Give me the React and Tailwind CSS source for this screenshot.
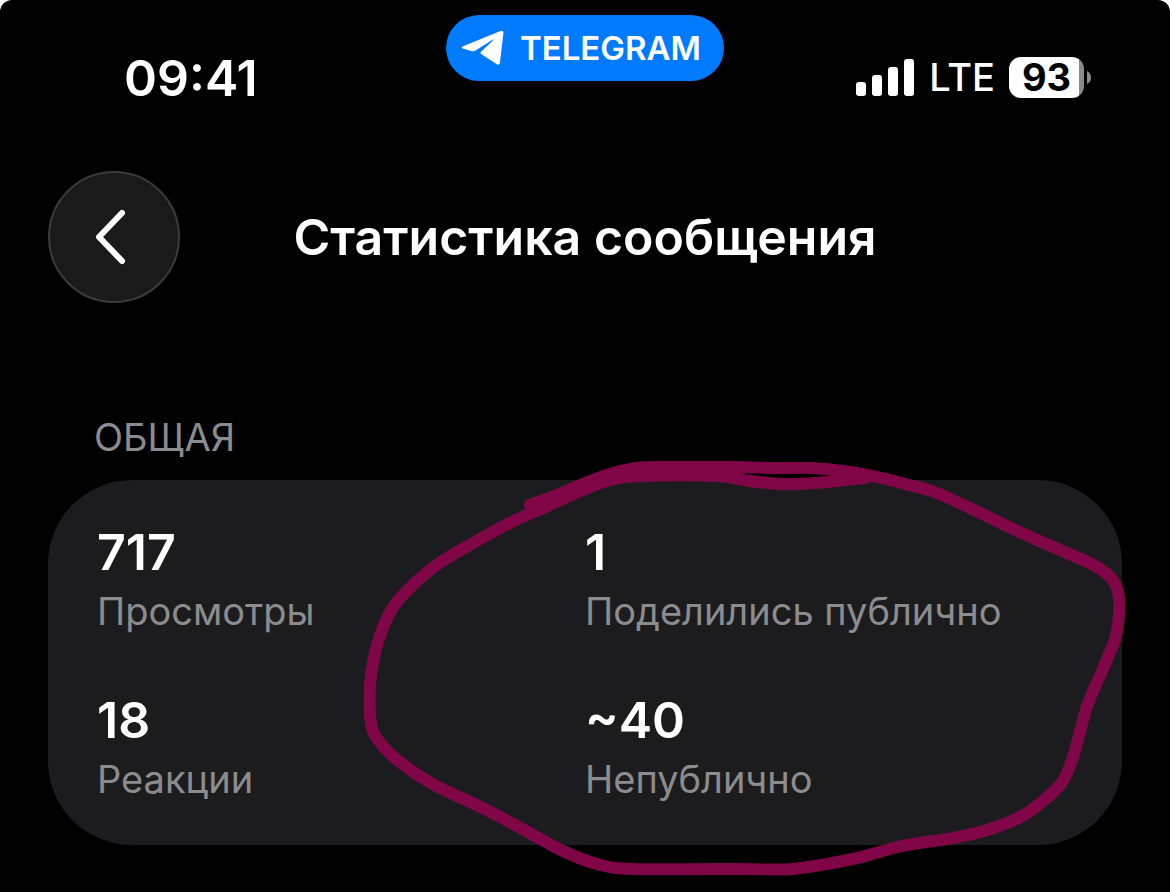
import React from "react";

const stats = [
  { value: "717", label: "Просмотры" },
  { value: "1", label: "Поделились публично" },
  { value: "18", label: "Реакции" },
  { value: "~40", label: "Непублично" },
];

const penPoints = [
  [530, 505], [557, 495], [583, 484], [610, 474], [637, 468], [667, 467], [735, 467], [775, 468], [812, 468], [843, 471],
  [873, 476], [905, 484], [937, 493], [980, 513], [1017, 531], [1064, 552], [1093, 565],
  [1110, 577], [1118, 592], [1119, 615], [1115, 640], [1100, 676], [1087, 707], [1078, 740],
  [1072, 761], [1062, 783], [1043, 802], [1020, 818], [987, 831], [953, 839], [902, 847],
  [853, 860], [793, 870], [740, 870], [633, 870], [597, 865], [563, 852], [517, 827],
  [483, 809], [433, 785], [400, 763], [379, 742], [371, 724], [370, 687], [374, 658],
  [380, 636], [391, 611], [407, 591], [437, 565], [470, 545], [510, 523], [543, 508],
  [583, 490], [610, 480], [640, 476], [717, 476], [750, 481], [783, 484], [815, 483],
  [845, 480], [866, 478],
];

function smoothPath(points) {
  let d = `M${points[0][0]} ${points[0][1]}`;
  for (let i = 0; i < points.length - 1; i++) {
    const a = points[i - 1] || points[i];
    const b = points[i];
    const c = points[i + 1];
    const e = points[i + 2] || c;
    d += ` C${b[0] + (c[0] - a[0]) / 6} ${b[1] + (c[1] - a[1]) / 6} ${c[0] - (e[0] - b[0]) / 6} ${c[1] - (e[1] - b[1]) / 6} ${c[0]} ${c[1]}`;
  }
  return d;
}

function StatusBar() {
  return (
    <div className="grid grid-cols-[1fr_auto_1fr] items-start pt-[15px]">
      <time className="justify-self-start pl-[124px] pt-[33px] text-[50px] leading-[60px] font-semibold">09:41</time>
      <a href="#telegram" className="flex h-[66px] items-center gap-4 rounded-full bg-[#007aff] pl-[15px] pr-[23px]">
        <svg viewBox="0 0 43 36" className="h-9 w-[43px]" fill="currentColor" aria-hidden="true">
          <path d="M2.1 16.2 39.5 1.1Q42.7 0 42.4 3.2L39 32.6Q38.5 36.2 35.4 34.1L20.4 24.2Q18.6 23.1 20.3 21.5L32.2 10.2Q33.2 9 31.5 9.8L14.6 20.6Q12.6 21.9 10.4 21L1.7 18.6Q-.2 17.6 2.1 16.2Z" />
        </svg>
        <span className="text-[33px] leading-[42px] font-semibold">TELEGRAM</span>
      </a>
      <div className="flex items-center justify-self-end pr-[79px] pt-[38px]">
        <svg viewBox="0 0 58 37" className="mr-[15px] h-[37px] w-[58px]" fill="currentColor" role="img" aria-label="Сигнал">
          <rect x="0" y="23" width="10" height="14" rx="3" />
          <rect x="16" y="16" width="10" height="21" rx="3" />
          <rect x="32" y="8" width="10" height="29" rx="3" />
          <rect x="48" y="0" width="10" height="37" rx="3" />
        </svg>
        <span className="mr-[14px] text-[38px] leading-[48px] font-medium">LTE</span>
        <div className="flex items-center gap-[3px]">
          <div className="flex h-[41px] w-[75px] items-center justify-center rounded-[12px] bg-linear-to-r from-white from-93% to-[#8a8a8a] to-93% text-[38px] leading-[48px] font-bold text-black">
            93
          </div>
          <svg viewBox="0 0 4 13" className="h-[13px] w-1" fill="#8a8a8a" aria-hidden="true">
            <path d="M0 0Q4 2 4 6.500Q4 11 0 13Z" />
          </svg>
        </div>
      </div>
    </div>
  );
}

export default function App() {
  return (
    <div className="min-h-screen bg-white font-['Inter','Roboto',sans-serif] text-white">
      <div className="min-h-screen rounded-t-[12px] bg-black pb-[46px]">
        <StatusBar />
        <header className="mt-[63px] grid grid-cols-[132px_1fr_132px] items-center px-12">
          <button type="button" aria-label="Назад" className="flex size-[132px] items-center justify-center rounded-full border-2 border-[#3b3b3b] bg-[#1a1a1a]">
            <svg viewBox="0 0 132 132" className="size-[132px] shrink-0" fill="none" stroke="currentColor" strokeWidth="6" strokeLinecap="round" strokeLinejoin="round" aria-hidden="true">
              <path d="M74 42 51 66 74 90" />
            </svg>
          </button>
          <h1 className="text-center text-[50px] leading-[60px] font-semibold">Статистика сообщения</h1>
        </header>
        <main className="px-12 pt-[110px]">
          <h2 className="pl-[46px] text-[38px] leading-[48px] text-[#8c8c8f]">ОБЩАЯ</h2>
          <section className="relative mt-[19px] rounded-[84px] bg-[#1c1c1e] px-[49px] py-[42px]">
            <dl className="grid grid-cols-2 gap-y-[55px]">
              {stats.map((s) => (
                <div key={s.label} className="flex flex-col-reverse gap-[5px]">
                  <dt className="text-[38px] leading-[48px] whitespace-nowrap text-[#8c8c8f]">{s.label}</dt>
                  <dd className="text-[50px] leading-[60px] font-semibold">{s.value}</dd>
                </div>
              ))}
            </dl>
            <svg viewBox="48 480 1074 366" preserveAspectRatio="none" className="pointer-events-none absolute inset-0 h-full w-full overflow-visible" aria-hidden="true">
              <path d={smoothPath(penPoints)} fill="none" stroke="#84054a" strokeOpacity="0.96" strokeWidth="12" strokeLinecap="round" strokeLinejoin="round" />
            </svg>
          </section>
        </main>
      </div>
    </div>
  );
}
